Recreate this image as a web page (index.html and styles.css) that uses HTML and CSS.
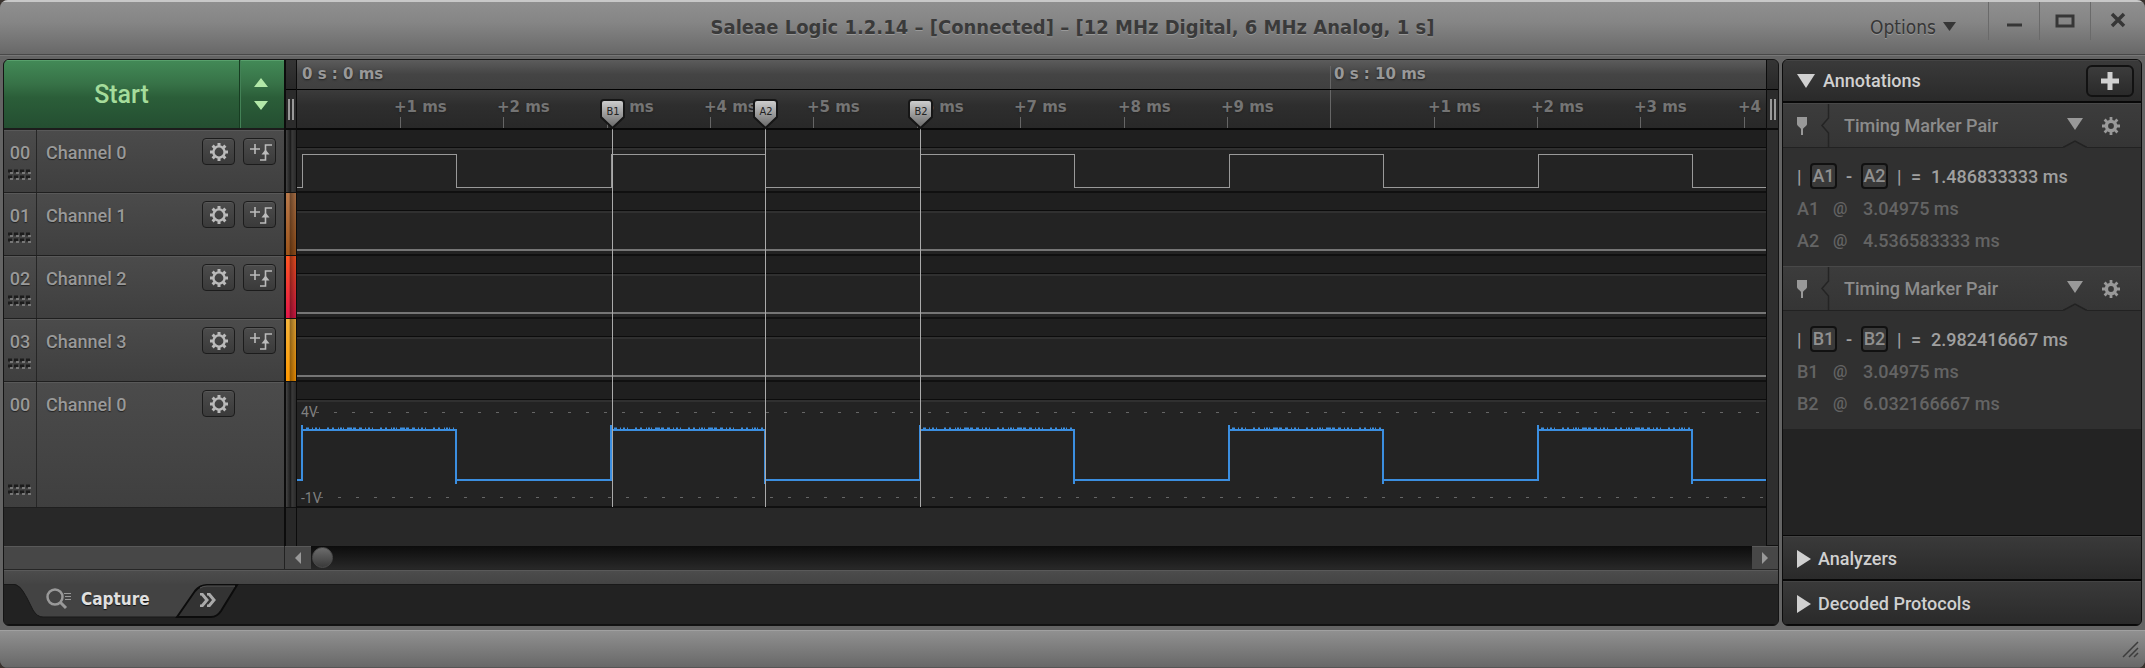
FILE: index.html
```html
<!DOCTYPE html>
<html lang="en">
<head>
<meta charset="utf-8">
<title>Saleae Logic 1.2.14</title>
<link rel="stylesheet" href="styles.css">
</head>
<body>
<svg class="defs" aria-hidden="true">
  <symbol id="gear" viewBox="0 0 20 20">
    <circle cx="10" cy="10" r="5.6" fill="none" stroke="currentColor" stroke-width="2.4"/>
    <path d="M10 1v3M10 16v3M1 10h3M16 10h3M3.6 3.6l2.1 2.1M14.3 14.3l2.1 2.1M16.4 3.6l-2.1 2.1M5.7 14.3l-2.1 2.1" stroke="currentColor" stroke-width="3"/>
  </symbol>
  <symbol id="gear-solid" viewBox="0 0 20 20">
    <circle cx="10" cy="10" r="4.6" fill="none" stroke="currentColor" stroke-width="3.4"/>
    <path d="M10 1v4M10 15v4M1 10h4M15 10h4M3.6 3.6l2.8 2.8M13.6 13.6l2.8 2.8M16.4 3.6l-2.8 2.8M6.4 13.6l-2.8 2.8" stroke="currentColor" stroke-width="2.8"/>
  </symbol>
  <symbol id="trigger" viewBox="0 0 24 20">
    <path d="M2 7h10M7 2v10M12 18h5.500V3H24" fill="none" stroke="currentColor" stroke-width="1.600"/>
    <path d="M13.500 12.500h8l-4-5z" fill="currentColor"/>
  </symbol>
  <symbol id="grip" viewBox="0 0 24 12">
    <path d="M0 2h24M0 8h24" stroke="#1c1c1c" stroke-width="3" stroke-dasharray="4 2"/>
    <path d="M2 4h24M2 10h24" stroke="#777" stroke-width="2" stroke-dasharray="3 3"/>
  </symbol>
  <symbol id="pin" viewBox="0 0 12 20">
    <path d="M1 1h10v7c0 2-3 3-4 5v6H5v-6C4 11 1 10 1 8z" fill="currentColor"/>
  </symbol>
  <linearGradient id="flag" x1="0" y1="0" x2="0" y2="1">
    <stop offset="0" stop-color="#d0d0d0"/><stop offset="1" stop-color="#666"/>
  </linearGradient>
</svg>

<div class="window">
  <header class="titlebar">
    <h1 class="title">Saleae Logic 1.2.14 – [Connected] – [12 MHz Digital, 6 MHz Analog, 1 s]</h1>
    <button class="options">Options <svg width="13" height="9"><path d="M0 0h13L6.500 9z" fill="currentColor"/></svg></button>
    <div class="winbtns">
      <button aria-label="Minimize"><svg width="20" height="20"><path d="M3 14h15" stroke="currentColor" stroke-width="3"/></svg></button>
      <button aria-label="Maximize"><svg width="20" height="20"><rect x="2" y="5" width="16" height="10" fill="none" stroke="currentColor" stroke-width="3"/></svg></button>
      <button aria-label="Close"><svg width="20" height="20"><path d="M4 3l12 12M16 3L4 15" stroke="currentColor" stroke-width="3.500"/></svg></button>
    </div>
  </header>

  <main class="main">
    <section class="capture">
      <div class="workspace">
        <div class="channels">
          <div class="startbar">
            <button class="start">Start</button>
            <button class="startopts" aria-label="Capture settings"><svg width="16" height="34"><path d="M0 10h14L7 1zM0 24h14l-7 9z" fill="currentColor"/></svg></button>
          </div>
          <div class="channel">
            <div class="num">00<svg><use href="#grip"/></svg></div>
            <div class="name">Channel 0</div>
            <button class="tool" aria-label="Channel settings"><svg><use href="#gear"/></svg></button>
            <button class="tool" aria-label="Add trigger"><svg class="trig"><use href="#trigger"/></svg></button>
          </div>
          <div class="channel">
            <div class="num">01<svg><use href="#grip"/></svg></div>
            <div class="name">Channel 1</div>
            <button class="tool" aria-label="Channel settings"><svg><use href="#gear"/></svg></button>
            <button class="tool" aria-label="Add trigger"><svg class="trig"><use href="#trigger"/></svg></button>
          </div>
          <div class="channel">
            <div class="num">02<svg><use href="#grip"/></svg></div>
            <div class="name">Channel 2</div>
            <button class="tool" aria-label="Channel settings"><svg><use href="#gear"/></svg></button>
            <button class="tool" aria-label="Add trigger"><svg class="trig"><use href="#trigger"/></svg></button>
          </div>
          <div class="channel">
            <div class="num">03<svg><use href="#grip"/></svg></div>
            <div class="name">Channel 3</div>
            <button class="tool" aria-label="Channel settings"><svg><use href="#gear"/></svg></button>
            <button class="tool" aria-label="Add trigger"><svg class="trig"><use href="#trigger"/></svg></button>
          </div>
          <div class="channel analog">
            <div class="num">00<svg><use href="#grip"/></svg></div>
            <div class="name">Channel 0</div>
            <button class="tool" aria-label="Channel settings"><svg><use href="#gear"/></svg></button>
            <span class="tool-space"></span>
          </div>
        </div>

        <div class="colors">
          <div class="cap"></div><div class="handle"><i></i></div>
          <div class="swatch grey"></div><div class="swatch brown"></div><div class="swatch red"></div><div class="swatch orange"></div><div class="swatch grey tall"></div>
        </div>

        <div class="plot">
          <svg class="ruler major"><path d="M1033.500 6V30" stroke="#666"/><text x="5" y="19">0 s : 0 ms</text><text x="1037" y="19">0 s : 10 ms</text></svg>
          <svg class="ruler minor">
            <path stroke="#666" d="M103.500 27V40M206.500 27V40M310.500 27V40M413.500 27V40M516.500 27V40M620.500 27V40M723.500 27V40M827.500 27V40M930.500 27V40M1033.500 0V40M1137.500 27V40M1240.500 27V40M1343.500 27V40M1447.500 27V40"/>
            <text x="97" y="22">+1 ms</text><text x="200" y="22">+2 ms</text><text x="304" y="22">+3 ms</text><text x="407" y="22">+4 ms</text><text x="510" y="22">+5 ms</text><text x="614" y="22">+6 ms</text><text x="717" y="22">+7 ms</text><text x="821" y="22">+8 ms</text><text x="924" y="22">+9 ms</text>
            <text x="1131" y="22">+1 ms</text><text x="1234" y="22">+2 ms</text><text x="1337" y="22">+3 ms</text><text x="1441" y="22">+4 ms</text>
          </svg>
          <div class="lane"><svg><path class="digital" d="M0 57H5V24H159V57H314V24H468V57H623V24H777V57H932V24H1086V57H1241V24H1395V57H1550V24H1704V57H1859V24H2014V57H3000"/></svg></div>
          <div class="lane"><svg><path class="digital flat" d="M0 57H3000"/></svg></div>
          <div class="lane"><svg><path class="digital flat" d="M0 57H3000"/></svg></div>
          <div class="lane"><svg><path class="digital flat" d="M0 57H3000"/></svg></div>
          <div class="lane analog"><svg>
            <path class="volt" d="M19 30.500H3000M23 115.500H3000"/>
            <text class="vlabel" x="4" y="35">4V</text><text class="vlabel" x="4" y="121">-1V</text>
            <path class="wave" d="M0 98H5V43V48H159V102V98H314V43V48H468V102V98H623V43V48H777V102V98H932V43V48H1086V102V98H1241V43V48H1395V102V98H1550V43V48H1704V102V98H3000"/>
            <path class="noise" d="M9 46.500H157M317 46.500H466M626 46.500H775M935 46.500H1084M1244 46.500H1393M1553 46.500H1702"/>
          </svg></div>
          <svg class="markers">
            <path d="M315.500 68V447M468.500 68V447M623.500 68V447" stroke="#aaa"/>
            <g fill="url(#flag)" stroke="#161616" stroke-width="2">
              <path d="M307 40h17q3 0 3 3v14l-11.500 11L304 57V43q0-3 3-3z"/>
              <path d="M460 40h17q3 0 3 3v14l-11.500 11L457 57V43q0-3 3-3z"/>
              <path d="M615 40h17q3 0 3 3v14l-11.500 11L612 57V43q0-3 3-3z"/>
            </g>
            <text x="316" y="55">B1</text><text x="469" y="55">A2</text><text x="624" y="55">B2</text>
          </svg>
        </div>

        <div class="edge"><div class="cap"></div><div class="handle"><i></i></div><div class="rest"></div></div>
      </div>

      <div class="scrollrow">
        <div class="blank"></div>
        <button class="arrow" aria-label="Scroll left"><svg width="8" height="14"><path d="M7 1v12L1 7z" fill="currentColor"/></svg></button>
        <input class="scroller" type="range" min="0" max="100" value="0" aria-label="Timeline position">
        <button class="arrow" aria-label="Scroll right"><svg width="8" height="14"><path d="M1 1v12l6-6z" fill="currentColor"/></svg></button>
      </div>
      <div class="shelf"></div>
      <nav class="tabs">
        <svg class="tabshape" width="240" height="36" viewBox="0 0 240 36">
          <path d="M0 0H10C17 1 19 7 23 14L29 26Q33 33 39 33H174L194 6Q199 0 206 0Z" fill="#434343"/>
          <path d="M0 0H8C16 1 19 7 23 14L29 26Q33 33 39 33H174" fill="none" stroke="#191919"/>
          <path d="M173 33L191 7Q196 1 203 1H233L217 27Q213 33 207 33Z" fill="#333" stroke="#0c0c0c" stroke-width="2"/>
          <path d="M196 4q3-2 7-2h28" fill="none" stroke="#555"/>
        </svg>
        <button class="tab">
          <svg width="26" height="22" fill="none" stroke="#999"><circle cx="9" cy="9" r="7.500" stroke-width="2.500"/><path d="M14 14l6 6" stroke-width="3"/><path d="M18 5.500h7M19 8.500h6M19 11.500h6" stroke-width="1"/></svg>
          Capture
        </button>
        <button class="more" aria-label="More tabs"><svg width="18" height="14" fill="none" stroke="#aaa" stroke-width="3"><path d="M1 1h2l5 6-5 6H1M8 1h2l5 6-5 6H8"/></svg></button>
      </nav>
    </section>

    <aside class="side">
      <div class="sechead"><button class="toggle"><svg width="18" height="18"><path d="M0 2h18L9 16z" fill="currentColor"/></svg>Annotations</button>
        <button class="add" aria-label="Add annotation"><svg width="18" height="18"><path d="M9 0v18M0 9h18" stroke="currentColor" stroke-width="5"/></svg></button></div>
      <div class="list">
        <article class="pair">
          <div class="pairhead">
            <div class="pinbox"><svg width="12" height="20"><use href="#pin"/></svg></div>
            <svg class="notch" width="9" height="43"><path d="M7.500 0V14L1 21.500L7.500 29V43" fill="none" stroke="#242424" stroke-width="1.500"/></svg>
            <h2>Timing Marker Pair</h2>
            <button class="plain" aria-label="Collapse"><svg width="16" height="18"><path d="M0 1h16L8 13z" fill="currentColor"/></svg></button>
            <button class="plain" aria-label="Pair settings"><svg width="20" height="20"><use href="#gear-solid"/></svg></button>
            <svg class="peak" width="24" height="8"><path d="M0 7h1L12 1l11 6h1v1H0z" fill="#303030"/><path d="M0 7h1L12 1l11 6h1" fill="none" stroke="#222" stroke-width="1.500"/></svg>
          </div>
          <div class="pairbody">
            <p class="diff"><span class="bar">|</span><b>A1</b><span class="minus">-</span><b>A2</b><span class="bar2">|</span><span class="eq">=</span><span>1.486833333 ms</span></p>
            <p class="at"><span>A1</span><span>@</span><span>3.04975 ms</span></p>
            <p class="at"><span>A2</span><span>@</span><span>4.536583333 ms</span></p>
          </div>
        </article>
        <article class="pair">
          <div class="pairhead">
            <div class="pinbox"><svg width="12" height="20"><use href="#pin"/></svg></div>
            <svg class="notch" width="9" height="43"><path d="M7.500 0V14L1 21.500L7.500 29V43" fill="none" stroke="#242424" stroke-width="1.500"/></svg>
            <h2>Timing Marker Pair</h2>
            <button class="plain" aria-label="Collapse"><svg width="16" height="18"><path d="M0 1h16L8 13z" fill="currentColor"/></svg></button>
            <button class="plain" aria-label="Pair settings"><svg width="20" height="20"><use href="#gear-solid"/></svg></button>
            <svg class="peak" width="24" height="8"><path d="M0 7h1L12 1l11 6h1v1H0z" fill="#303030"/><path d="M0 7h1L12 1l11 6h1" fill="none" stroke="#222" stroke-width="1.500"/></svg>
          </div>
          <div class="pairbody">
            <p class="diff"><span class="bar">|</span><b>B1</b><span class="minus">-</span><b>B2</b><span class="bar2">|</span><span class="eq">=</span><span>2.982416667 ms</span></p>
            <p class="at"><span>B1</span><span>@</span><span>3.04975 ms</span></p>
            <p class="at"><span>B2</span><span>@</span><span>6.032166667 ms</span></p>
          </div>
        </article>
      </div>
      <div class="sechead closed"><button class="toggle"><svg width="18" height="18"><path d="M2 0v18l14-9z" fill="currentColor"/></svg>Analyzers</button></div>
      <div class="sechead closed"><button class="toggle"><svg width="18" height="18"><path d="M2 0v18l14-9z" fill="currentColor"/></svg>Decoded Protocols</button></div>
    </aside>
  </main>

  <footer class="status"><svg width="17" height="17"><path d="M1 16L16 1M7 16l9-9M12 16l4-4" stroke="#3c3c3c" stroke-width="1.500"/></svg></footer>
</div>
</body>
</html>
```

FILE: styles.css
```css
* { box-sizing: border-box; }
body { margin: 0; background: #3a332f; font-family: Roboto, "Liberation Sans", sans-serif; font-size: 18px; color: #999; }
button { border: 0; padding: 0; margin: 0; background: none; color: inherit; font: inherit; display: flex; align-items: center; justify-content: center; }
svg { display: block; flex: none; }
h1, h2, p { margin: 0; }
.defs { position: absolute; width: 0; height: 0; }

.window { min-height: 100vh; display: flex; flex-direction: column; background: #646464; border-radius: 8px; overflow: hidden; }

.titlebar { height: 55px; display: grid; grid-template-columns: 1fr auto auto; position: relative; border-top: 2px solid #c8c8c8; border-bottom: 1px solid #484848; background: linear-gradient(#8f8f8f, #858585 40%, #686868); color: #363636; }
.title { position: absolute; inset: 0; text-align: center; font: bold 20px/50px "DejaVu Sans Condensed", "DejaVu Sans", sans-serif; color: #3a3a3a; text-shadow: 0 1px 0 #999; }
.options { grid-column: 2; gap: 7px; margin-right: 32px; height: 49px; font: 19px "DejaVu Sans Condensed", "DejaVu Sans", sans-serif; position: relative; text-shadow: 0 1px 0 #999; }
.winbtns { display: flex; height: 38px; position: relative; }
.winbtns button { width: 51px; border-left: 1px solid #6a6a6a; }
.winbtns button:last-child { width: 55px; }

.main { flex: 1; display: grid; grid-template-columns: 1fr 360px; gap: 3px; padding: 3px 3px 4px; border-top: 1px solid #777; }
.capture { display: flex; flex-direction: column; min-width: 0; border: 1px solid #141414; border-radius: 6px; overflow: hidden; background: #282828; }
.workspace { flex: 1; display: grid; grid-template-columns: 280px 13px 1fr 12px; }

.startbar { display: flex; height: 70px; border-bottom: 2px solid #1c1c1c; color: #a5dc9b; background: linear-gradient(#438a57, #377247 35%, #2b5e39 55%, #244e31); box-shadow: inset 0 1px 0 #58a06c; }
.start { flex: 1; font-size: 25px; font-weight: 500; }
.startopts { width: 45px; border-left: 1px solid #173d22; box-shadow: inset 1px 0 0 #438156; color: #b2e8a8; }

.channel { height: 63px; display: flex; align-items: flex-start; gap: 8px; padding-right: 8px; background: linear-gradient(#4b4b4b, #3f3f3f); border-bottom: 1px solid #1f1f1f; box-shadow: inset 0 1px 0 #595959; font-weight: 500; text-shadow: 0 1px 1px #222; }
.channel.analog { height: 126px; }
.num { width: 33px; align-self: stretch; padding: 12px 0 11px; border-right: 1px solid #262626; display: flex; flex-direction: column; align-items: center; justify-content: space-between; line-height: 22px; }
.num svg { width: 24px; height: 12px; }
.name { flex: 1; padding: 12px 0 0 1px; line-height: 22px; }
.tool { width: 33px; height: 27px; margin-top: 8px; border: 1px solid #1c1c1c; border-radius: 4px; background: linear-gradient(#4c4c4c, #3a3a3a); box-shadow: inset 0 1px 0 #585858; color: #bbb; }
.tool svg { width: 20px; height: 20px; }
.tool .trig { width: 24px; }
.tool-space { width: 33px; }

.colors, .edge { display: flex; flex-direction: column; border: solid #0c0c0c; border-width: 0 1px 0 2px; }
.cap { height: 30px; background: linear-gradient(#353535, #282828); border-bottom: 1px solid #000; }
.handle { height: 40px; background: #2b2b2b; border-bottom: 2px solid #0c0c0c; display: flex; align-items: center; justify-content: center; }
.handle i { width: 6px; height: 21px; border: solid #999; border-width: 0 2px; }
.swatch { height: 63px; border-bottom: 1px solid #111; }
.grey { background: linear-gradient(90deg, #444, #1c1c1c 45%, #3a3a3a 60%, #2a2a2a); }
.tall { height: 126px; }
.brown { background: linear-gradient(90deg, #0000 30%, #0006 45%, #0002), linear-gradient(#b97a4c, #9d541a); }
.red { background: linear-gradient(90deg, #0000 30%, #0006 45%, #0002), linear-gradient(#ff5722, #e3174a); }
.orange { background: linear-gradient(90deg, #0000 30%, #0006 45%, #0002), linear-gradient(#f5b43c, #ff9800); }
.edge { border-width: 0 0 0 1px; }
.rest { flex: 1; background: #2e2e2e; border-bottom: 1px solid #111; }

.plot { position: relative; min-width: 0; overflow: hidden; }
.plot svg { width: 100%; }
.ruler text { font: bold 15px "DejaVu Sans", sans-serif; fill: #999; text-shadow: 0 1px 2px #222; }
.major { height: 30px; background: linear-gradient(#5c5c5c, #444 50%, #404040); border-bottom: 1px solid #000; }
.minor { height: 40px; background: linear-gradient(#3b3b3b, #2e2e2e 40%, #282828); border-bottom: 2px solid #080808; }
.ruler.minor text { fill: #747474; }
.lane { height: 63px; border-bottom: 2px solid #101010; background: linear-gradient(#1f1f1f 17px, #0c0c0c 17px, #0c0c0c 18px, #303030 18px, #303030 20px, #232323 20px); }
.lane svg { height: 61px; }
.lane.analog { height: 126px; }
.lane.analog svg { height: 124px; }
.digital { fill: none; stroke: #999; stroke-width: 1; shape-rendering: crispEdges; }
.flat { stroke-width: 2; stroke: #757575; }
.wave { fill: none; stroke: #3b8ee0; stroke-width: 2; stroke-linejoin: bevel; shape-rendering: crispEdges; }
.noise { fill: none; stroke: #3b8ee0; stroke-width: 2; stroke-dasharray: 3 3 1 2 2 2 1 7 2 3 2 4 1 1 2 1 1 3 5 1 3 3; }
.volt { stroke: #666; stroke-dasharray: 3 15; }
.vlabel { font-size: 14px; fill: #808080; }
.markers { position: absolute; inset: 0; height: 450px; pointer-events: none; }
.markers text { font: 11px "DejaVu Sans Condensed", sans-serif; fill: #222; text-anchor: middle; }

.scrollrow { display: grid; grid-template-columns: 281px 26px 1fr 26px; height: 24px; border-bottom: 1px solid #262626; background: #474747; box-shadow: inset 0 1px 0 #595959; }
.blank { border-right: 1px solid #222; }
.arrow { color: #999; }
.scroller { appearance: none; width: 100%; height: 23px; margin: 0; padding: 1px; background: linear-gradient(#0c0c0c, #282828); }
.scroller::-webkit-slider-thumb { appearance: none; width: 21px; height: 21px; border-radius: 50%; background: linear-gradient(#6c6c6c, #3a3a3a); border: 1px solid #4c4c4c; }
.shelf { height: 14px; background: linear-gradient(#4c4c4c, #444); border-top: 1px solid #5a5a5a; }
.tabs { height: 41px; display: flex; background: #222; border-bottom: 1px solid #111; position: relative; box-shadow: inset 0 1px 0 #191919; }
.tabshape { position: absolute; left: 0; top: 0; }
.tab { position: relative; width: 183px; height: 30px; padding-left: 42px; gap: 9px; justify-content: flex-start; color: #e0e0e0; font: bold 17px "DejaVu Sans Condensed", "DejaVu Sans", sans-serif; text-shadow: 0 1px 1px #111; }
.more { position: relative; width: 42px; height: 32px; }

.side { display: flex; flex-direction: column; border: 1px solid #0c0c0c; border-radius: 6px; overflow: hidden; background: #232323; }
.sechead { height: 43px; display: flex; align-items: center; justify-content: space-between; padding: 0 7px 0 14px; background: linear-gradient(#3a3a3a, #2a2a2a); border-bottom: 2px solid #080808; color: #d0d0d0; box-shadow: inset 0 1px 0 #444; }
.closed { height: 45px; padding: 2px 0 0 12px; border-top: 1px solid #080808; border-bottom-width: 1px; }
.toggle { gap: 8px; font-weight: 500; }
.closed .toggle { gap: 5px; }
.add { width: 48px; height: 32px; border: 2px solid #121212; border-radius: 6px; background: linear-gradient(#3c3c3c, #2a2a2a); }
.list { flex: 1; }
.pairhead { height: 45px; display: flex; align-items: center; position: relative; padding-right: 20px; background: linear-gradient(#3c3c3c, #353535); border-bottom: 1px solid #222; border-top: 1px solid #484848; }
.pinbox { width: 38px; padding-left: 13px; color: #999; }
.pairhead h2 { flex: 1; padding-left: 14px; font-size: 18px; font-weight: 500; color: #8c8c8c; }
.plain + .plain { margin-left: 18px; }
.peak { position: absolute; right: 54px; bottom: -1px; }
.pairbody { padding: 12px 14px 9px; height: 118px; background: #303030; font-weight: 500; }
.pairbody p { height: 32px; display: flex; align-items: center; }
.diff { color: #a0a0a0; }
.diff b { width: 27px; height: 26px; border: 2px solid #111; border-radius: 4px; background: #393939; color: #909090; font-weight: 500; line-height: 22px; text-align: center; }
.bar { width: 13px; }
.minus { width: 24px; text-align: center; }
.bar2 { padding-left: 9px; width: 23px; }
.eq { width: 20px; }
.at { color: #646464; }
.at span:first-child { width: 36px; }
.at span:nth-child(2) { width: 30px; font-size: 16px; }

.status { height: 38px; display: flex; justify-content: flex-end; align-items: center; padding-right: 6px; border-top: 1px solid #a0a0a0; border-bottom: 1px solid #555; background: linear-gradient(#909090, #686868); }
```
